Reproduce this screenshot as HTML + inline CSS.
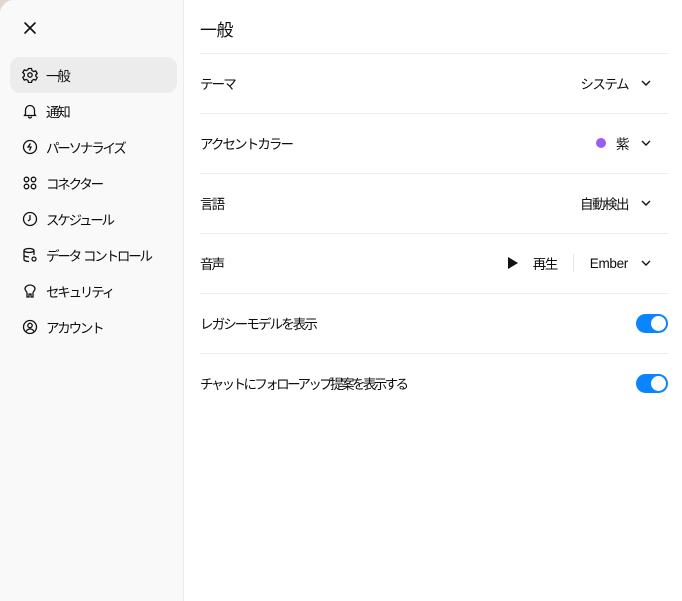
<!DOCTYPE html>
<html><head><meta charset="utf-8"><style>
*{margin:0;padding:0;box-sizing:border-box}
html,body{width:682px;height:601px;overflow:hidden;background:#e6d6d2}
body{font-family:"Liberation Sans","Noto Sans CJK JP",sans-serif;font-size:14px;color:#0d0d0d}
.win{position:absolute;left:0;top:0;width:682px;height:601px;background:#fff;border-top-left-radius:14px;overflow:hidden}
.side{position:absolute;left:0;top:0;width:184px;height:601px;background:#f9f9f9;border-right:1px solid #ececec}
.close{position:absolute;left:22px;top:20px}
.item{position:absolute;left:10px;width:167px;height:36px;border-radius:10px;display:flex;align-items:center;padding-left:12px}
.item.act{background:#ececec}
.item svg{width:16px;height:16px;margin-right:8px;flex:none}
.item span{font-size:13.5px;letter-spacing:-2.2px}
.title{position:absolute;left:200px;top:16px;font-size:17px;letter-spacing:-0.5px}
.hr{position:absolute;left:200px;width:468px;height:1px;background:#ececec}
.row{position:absolute;left:200px;width:468px;height:20px;display:flex;align-items:center;justify-content:space-between;font-size:13.5px;margin-top:-1px}
.row>span:first-child{letter-spacing:-1.9px}
.r{display:flex;align-items:center;gap:6px;letter-spacing:-1.5px;margin-right:16px}
.chev{width:12px;height:12px;margin-left:6px}
.tog{width:32px;height:19px;border-radius:10px;background:#0a84ff;position:relative}
.tog::after{content:"";position:absolute;right:2px;top:2px;width:15px;height:15px;border-radius:50%;background:#fff}
</style></head><body>
<div class="win">
<div class="side">
<svg class="close" width="16" height="16" viewBox="0 0 16 16"><path d="M3 3L13 13M13 3L3 13" stroke="#111" stroke-width="1.6" stroke-linecap="round"/></svg>
<div class="item act" style="top:57px"><svg viewBox="0 0 16 16" fill="none" stroke="#111" stroke-width="1.3"><circle cx="8" cy="8" r="2.2"/><path d="M6.5 1.5h3l.5 2 1.7 1 2-.6 1.5 2.6-1.5 1.5v1l1.5 1.5-1.5 2.6-2-.6-1.7 1-.5 2h-3l-.5-2-1.7-1-2 .6L.8 10.5l1.5-1.5V8v-1L.8 5.5 2.3 2.9l2 .6 1.7-1z"/></svg><span>一般</span></div>
<div class="item" style="top:93px"><svg viewBox="0 0 16 16" fill="none" stroke="#111" stroke-width="1.3"><path d="M3.5 11V7a4.5 4.5 0 019 0v4l1 1.5h-11zM6.5 13.5a1.5 1.5 0 003 0"/></svg><span>通知</span></div>
<div class="item" style="top:129px"><svg viewBox="0 0 16 16" fill="none" stroke="#111" stroke-width="1.3"><circle cx="8" cy="8" r="6.5"/><path d="M8.5 4.5L6 8h3l-1.5 3.5"/></svg><span>パーソナライズ</span></div>
<div class="item" style="top:165px"><svg viewBox="0 0 16 16" fill="none" stroke="#111" stroke-width="1.3"><circle cx="4.5" cy="4.5" r="2.3"/><circle cx="11.5" cy="4.5" r="2.3"/><circle cx="4.5" cy="11.5" r="2.3"/><circle cx="11.5" cy="11.5" r="2.3"/></svg><span>コネクター</span></div>
<div class="item" style="top:201px"><svg viewBox="0 0 16 16" fill="none" stroke="#111" stroke-width="1.3"><circle cx="8" cy="8" r="6.5"/><path d="M8 4v4.5L6 10"/></svg><span>スケジュール</span></div>
<div class="item" style="top:237px"><svg viewBox="0 0 16 16" fill="none" stroke="#111" stroke-width="1.3"><ellipse cx="7" cy="3.5" rx="5" ry="2"/><path d="M2 3.5v9c0 1 2 2 5 2M12 3.5V8M2 8c0 1 2 2 5 2"/><circle cx="12" cy="12" r="2"/></svg><span>データ&nbsp; コントロール</span></div>
<div class="item" style="top:273px"><svg viewBox="0 0 16 16" fill="none" stroke="#111" stroke-width="1.3"><path d="M3 6a5 4 0 0110 0c0 2-2 2-2 4v4H9v-3H7v3H5v-4C5 8 3 8 3 6z"/></svg><span>セキュリティ</span></div>
<div class="item" style="top:309px"><svg viewBox="0 0 16 16" fill="none" stroke="#111" stroke-width="1.3"><circle cx="8" cy="8" r="6.5"/><circle cx="8" cy="6.5" r="2.2"/><path d="M4 12.5c1-2 2.5-2.5 4-2.5s3 .5 4 2.5"/></svg><span>アカウント</span></div>
</div>
<div class="title">一般</div>
<div class="hr" style="top:53px"></div>
<div class="row" style="top:74px"><span>テーマ</span><span class="r">システム<svg class="chev" viewBox="0 0 12 12"><path d="M2 4l4 4 4-4" fill="none" stroke="#111" stroke-width="1.4"/></svg></span></div>
<div class="hr" style="top:113px"></div>
<div class="row" style="top:134px"><span>アクセントカラー</span><span class="r"><span style="width:10px;height:10px;border-radius:50%;background:#9c5cf6;margin-right:4px"></span>紫<svg class="chev" viewBox="0 0 12 12"><path d="M2 4l4 4 4-4" fill="none" stroke="#111" stroke-width="1.4"/></svg></span></div>
<div class="hr" style="top:173px"></div>
<div class="row" style="top:194px"><span>言語</span><span class="r">自動検出<svg class="chev" viewBox="0 0 12 12"><path d="M2 4l4 4 4-4" fill="none" stroke="#111" stroke-width="1.4"/></svg></span></div>
<div class="hr" style="top:233px"></div>
<div class="row" style="top:254px"><span>音声</span><span class="r"><svg width="12" height="12" viewBox="0 0 12 12"><path d="M1 0L11 6L1 12z" fill="#111"/></svg><span style="margin-left:8px">再生</span><span style="width:1px;height:18px;background:#e5e5e5;margin:0 10px"></span><span style="letter-spacing:-0.3px">Ember</span><svg class="chev" viewBox="0 0 12 12"><path d="M2 4l4 4 4-4" fill="none" stroke="#111" stroke-width="1.4"/></svg></span></div>
<div class="hr" style="top:293px"></div>
<div class="row" style="top:314px"><span>レガシーモデルを表示</span><div class="tog"></div></div>
<div class="hr" style="top:353px"></div>
<div class="row" style="top:374px"><span style="letter-spacing:-2.6px">チャットにフォローアップ提案を表示する</span><div class="tog"></div></div>
</div>
</body></html>
